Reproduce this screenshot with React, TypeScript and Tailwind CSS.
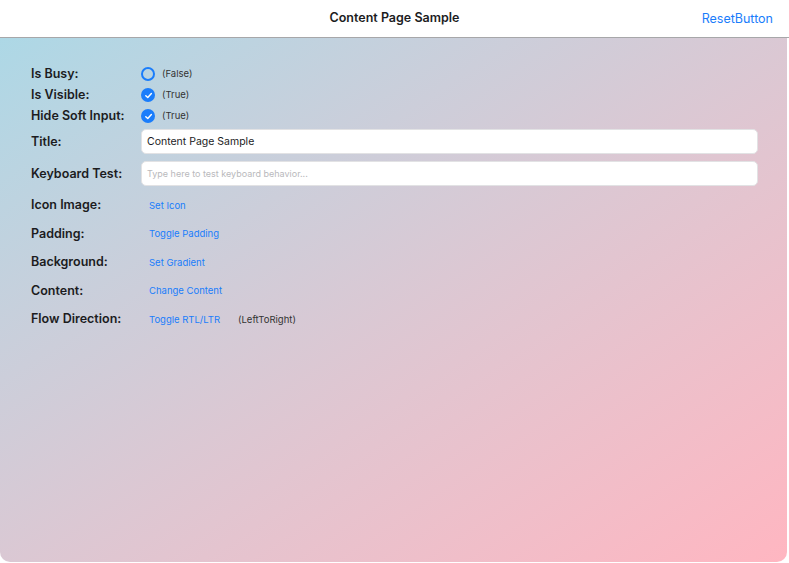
import React from 'react';

const font = { fontFamily: 'Inter, "Liberation Sans", sans-serif' };

const Label: React.FC<{ children: React.ReactNode }> = ({ children }) => (
  <div className="w-[110px] shrink-0 text-[12.5px] font-semibold text-[#1c1c1e]">{children}</div>
);

const Check: React.FC<{ on: boolean }> = ({ on }) =>
  on ? (
    <div className="w-[14px] h-[14px] rounded-full bg-[#1a7dfb] flex items-center justify-center">
      <svg width="9" height="9" viewBox="0 0 10 10" fill="none">
        <path d="M2 5.2 L4.2 7.3 L8.2 2.8" stroke="white" strokeWidth="1.6" strokeLinecap="round" strokeLinejoin="round" />
      </svg>
    </div>
  ) : (
    <div className="w-[14px] h-[14px] rounded-full border-2 border-[#1a7dfb]" />
  );

const LinkBtn: React.FC<{ children: React.ReactNode }> = ({ children }) => (
  <span className="text-[9.5px] text-[#1a7dfb] pl-[8px]">{children}</span>
);

const App: React.FC = () => {
  const toggles = [
    { label: 'Is Busy:', on: false, value: '(False)' },
    { label: 'Is Visible:', on: true, value: '(True)' },
    { label: 'Hide Soft Input:', on: true, value: '(True)' },
  ];
  const actions = [
    { label: 'Icon Image:', btn: 'Set Icon' },
    { label: 'Padding:', btn: 'Toggle Padding' },
    { label: 'Background:', btn: 'Set Gradient' },
    { label: 'Content:', btn: 'Change Content' },
    { label: 'Flow Direction:', btn: 'Toggle RTL/LTR', extra: '(LeftToRight)' },
  ];

  return (
    <div className="w-[789px] h-[563px] bg-white flex flex-col overflow-hidden" style={font}>
      {/* Nav bar */}
      <div className="h-[38px] shrink-0 flex items-center justify-between border-b border-[#a7a7a9] px-[16px] relative">
        <div className="w-[80px]" />
        <div className="absolute left-0 right-0 text-center text-[12.5px] font-semibold text-[#1c1c1e] pointer-events-none">
          Content Page Sample
        </div>
        <div className="text-[12.5px] text-[#1a7dfb] pt-[1px]">ResetButton</div>
      </div>

      {/* Content */}
      <div className="flex-1 mr-[2px] mb-[1px] rounded-b-[10px] bg-gradient-to-br from-[#add8e6] to-[#ffb6c1] pl-[31px] pr-[29px] pt-[27px]">
        <div className="flex flex-col gap-[3px]">
          {toggles.map(t => (
            <div key={t.label} className="flex items-center h-[18px]">
              <Label>{t.label}</Label>
              <Check on={t.on} />
              <span className="ml-[7px] text-[9.5px] text-[#333]">{t.value}</span>
            </div>
          ))}
        </div>

        <div className="flex flex-col gap-[7px] mt-[4px]">
          <div className="flex items-center h-[25px]">
            <Label><span className="relative top-[1px]">Title:</span></Label>
            <div className="flex-1 h-[25px] bg-white rounded-[5px] border border-[#e2e2e4] flex items-center px-[5px] text-[10.5px] text-[#1c1c1e]">
              Content Page Sample
            </div>
          </div>
          <div className="flex items-center h-[25px]">
            <Label><span className="relative top-[1px]">Keyboard Test:</span></Label>
            <div className="flex-1 h-[25px] bg-white rounded-[5px] border border-[#e2e2e4] flex items-center px-[5px] text-[9px] text-[#b9b9bc]">
              Type here to test keyboard behavior...
            </div>
          </div>
        </div>

        <div className="flex flex-col gap-[11px] mt-[11px]">
          {actions.map(a => (
            <div key={a.label} className="flex items-center h-[17.5px]">
              <Label>{a.label}</Label>
              <LinkBtn>{a.btn}</LinkBtn>
              {a.extra && <span className="ml-[18px] text-[9.5px] text-[#333]">{a.extra}</span>}
            </div>
          ))}
        </div>
      </div>
    </div>
  );
};

export default App;
